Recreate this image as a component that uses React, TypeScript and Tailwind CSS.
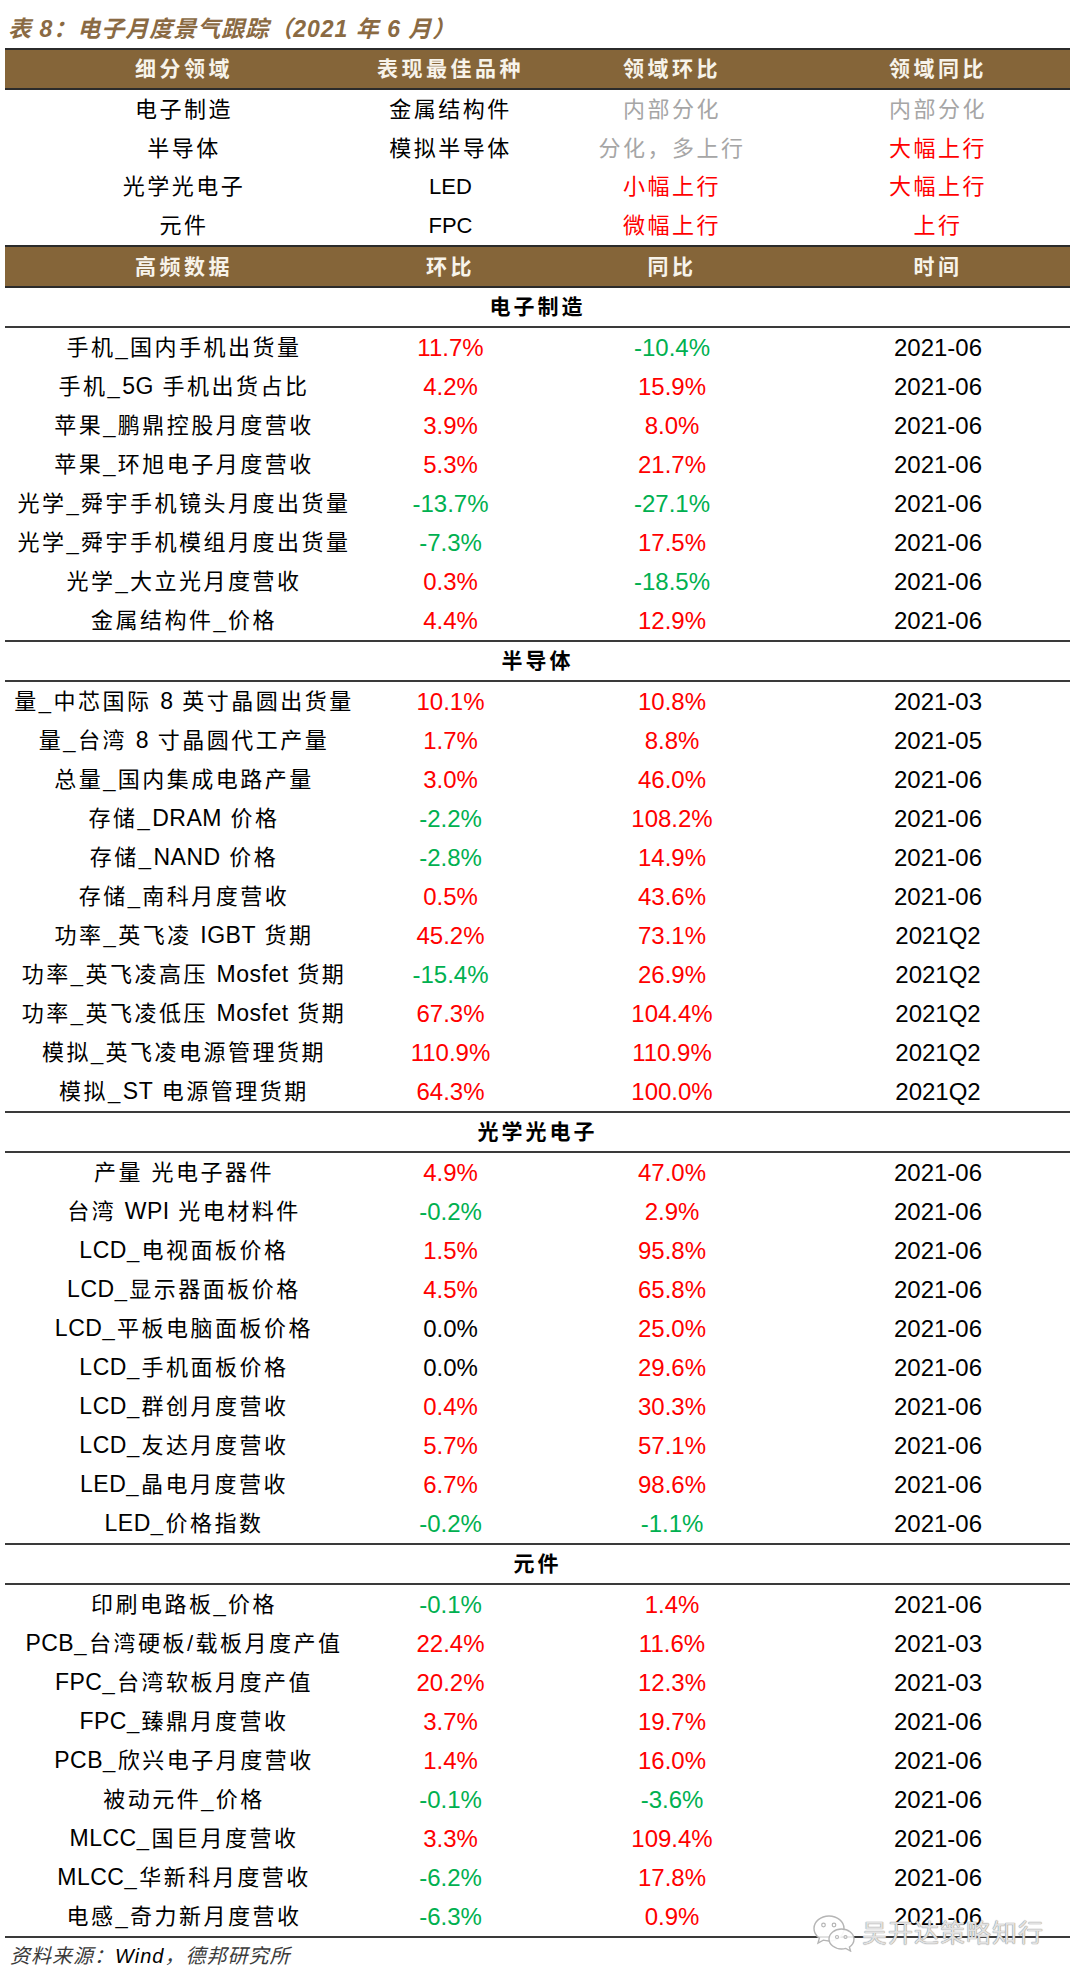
import React from "react";

type C = "r" | "g" | "k";
const colorOf = (c: C) =>
  c === "r" ? "text-[#ff0000]" : c === "g" ? "text-[#00b050]" : "text-black";

type Row = [string, string, C, string, C, string];

const sections: { title: string; rows: Row[] }[] = [
  {
    title: "电子制造",
    rows: [
      ["手机_国内手机出货量", "11.7%", "r", "-10.4%", "g", "2021-06"],
      ["手机_5G 手机出货占比", "4.2%", "r", "15.9%", "r", "2021-06"],
      ["苹果_鹏鼎控股月度营收", "3.9%", "r", "8.0%", "r", "2021-06"],
      ["苹果_环旭电子月度营收", "5.3%", "r", "21.7%", "r", "2021-06"],
      ["光学_舜宇手机镜头月度出货量", "-13.7%", "g", "-27.1%", "g", "2021-06"],
      ["光学_舜宇手机模组月度出货量", "-7.3%", "g", "17.5%", "r", "2021-06"],
      ["光学_大立光月度营收", "0.3%", "r", "-18.5%", "g", "2021-06"],
      ["金属结构件_价格", "4.4%", "r", "12.9%", "r", "2021-06"],
    ],
  },
  {
    title: "半导体",
    rows: [
      ["量_中芯国际 8 英寸晶圆出货量", "10.1%", "r", "10.8%", "r", "2021-03"],
      ["量_台湾 8 寸晶圆代工产量", "1.7%", "r", "8.8%", "r", "2021-05"],
      ["总量_国内集成电路产量", "3.0%", "r", "46.0%", "r", "2021-06"],
      ["存储_DRAM 价格", "-2.2%", "g", "108.2%", "r", "2021-06"],
      ["存储_NAND 价格", "-2.8%", "g", "14.9%", "r", "2021-06"],
      ["存储_南科月度营收", "0.5%", "r", "43.6%", "r", "2021-06"],
      ["功率_英飞凌 IGBT 货期", "45.2%", "r", "73.1%", "r", "2021Q2"],
      ["功率_英飞凌高压 Mosfet 货期", "-15.4%", "g", "26.9%", "r", "2021Q2"],
      ["功率_英飞凌低压 Mosfet 货期", "67.3%", "r", "104.4%", "r", "2021Q2"],
      ["模拟_英飞凌电源管理货期", "110.9%", "r", "110.9%", "r", "2021Q2"],
      ["模拟_ST 电源管理货期", "64.3%", "r", "100.0%", "r", "2021Q2"],
    ],
  },
  {
    title: "光学光电子",
    rows: [
      ["产量 光电子器件", "4.9%", "r", "47.0%", "r", "2021-06"],
      ["台湾 WPI 光电材料件", "-0.2%", "g", "2.9%", "r", "2021-06"],
      ["LCD_电视面板价格", "1.5%", "r", "95.8%", "r", "2021-06"],
      ["LCD_显示器面板价格", "4.5%", "r", "65.8%", "r", "2021-06"],
      ["LCD_平板电脑面板价格", "0.0%", "k", "25.0%", "r", "2021-06"],
      ["LCD_手机面板价格", "0.0%", "k", "29.6%", "r", "2021-06"],
      ["LCD_群创月度营收", "0.4%", "r", "30.3%", "r", "2021-06"],
      ["LCD_友达月度营收", "5.7%", "r", "57.1%", "r", "2021-06"],
      ["LED_晶电月度营收", "6.7%", "r", "98.6%", "r", "2021-06"],
      ["LED_价格指数", "-0.2%", "g", "-1.1%", "g", "2021-06"],
    ],
  },
  {
    title: "元件",
    rows: [
      ["印刷电路板_价格", "-0.1%", "g", "1.4%", "r", "2021-06"],
      ["PCB_台湾硬板/载板月度产值", "22.4%", "r", "11.6%", "r", "2021-03"],
      ["FPC_台湾软板月度产值", "20.2%", "r", "12.3%", "r", "2021-03"],
      ["FPC_臻鼎月度营收", "3.7%", "r", "19.7%", "r", "2021-06"],
      ["PCB_欣兴电子月度营收", "1.4%", "r", "16.0%", "r", "2021-06"],
      ["被动元件_价格", "-0.1%", "g", "-3.6%", "g", "2021-06"],
      ["MLCC_国巨月度营收", "3.3%", "r", "109.4%", "r", "2021-06"],
      ["MLCC_华新科月度营收", "-6.2%", "g", "17.8%", "r", "2021-06"],
      ["电感_奇力新月度营收", "-6.3%", "g", "0.9%", "r", "2021-06"],
    ],
  },
];

const GRID = "grid grid-cols-[358px_175px_268px_264px]";
const CJK = "font-['Liberation_Sans','Noto_Sans_CJK_SC',sans-serif]";

function Label({ text }: { text: string }) {
  const parts = text.split(/([A-Za-z0-9]+)/);
  return (
    <>
      {parts.map((p, i) =>
        /^[A-Za-z0-9]+$/.test(p) ? (
          <span key={i} className="text-[23px] tracking-[0.5px]">
            {p}
          </span>
        ) : (
          <span key={i}>{p}</span>
        )
      )}
    </>
  );
}

function Header({ cells, h }: { cells: string[]; h: string }) {
  return (
    <div
      className={`${GRID} ${h} items-center border-y-2 border-[#2b2b2b] bg-[#856539] text-center text-[21px] font-bold tracking-[3.5px] text-[#f7f3ea]`}
    >
      {cells.map((c, i) => (
        <div key={i}>{c}</div>
      ))}
    </div>
  );
}

function WeChatIcon() {
  return (
    <svg width="44" height="38" viewBox="0 0 44 38" fill="none">
      <path
        d="M17 2C8.7 2 2 7.6 2 14.5c0 3.9 2.1 7.3 5.4 9.6L6 29l5.3-2.8c1.8.5 3.7.8 5.7.8 8.3 0 15-5.6 15-12.5S25.3 2 17 2z"
        fill="rgba(255,255,255,0.85)"
        stroke="#b5b5b5"
        strokeWidth="1.4"
      />
      <circle cx="11.5" cy="11" r="1.8" fill="none" stroke="#b5b5b5" strokeWidth="1.2" />
      <circle cx="22" cy="11" r="1.8" fill="none" stroke="#b5b5b5" strokeWidth="1.2" />
      <path
        d="M29.5 15C22.6 15 17 19.5 17 25s5.6 10 12.5 10c1.5 0 3-.2 4.3-.6L38.5 37l-1.1-4c2.7-1.8 4.6-4.6 4.6-8 0-5.5-5.6-10-12.5-10z"
        fill="rgba(255,255,255,0.9)"
        stroke="#b5b5b5"
        strokeWidth="1.4"
      />
      <circle cx="25" cy="23" r="1.5" fill="none" stroke="#b5b5b5" strokeWidth="1.1" />
      <circle cx="33.5" cy="23" r="1.5" fill="none" stroke="#b5b5b5" strokeWidth="1.1" />
    </svg>
  );
}

export default function App() {
  return (
    <div className={`relative w-[1080px] bg-white ${CJK} text-black`}>
      <div className="h-[48px] pl-[8px] pt-[15px] text-[23px] font-bold italic leading-[28px] tracking-[1px] text-[#8a6a43]">
        表 8：电子月度景气跟踪（2021 年 6 月）
      </div>

      <div className="ml-[5px] w-[1065px]">
        <Header cells={["细分领域", "表现最佳品种", "领域环比", "领域同比"]} h="h-[42px]" />
        {[
          ["电子制造", "金属结构件", "内部分化", "gray", "内部分化", "gray"],
          ["半导体", "模拟半导体", "分化，多上行", "gray", "大幅上行", "red"],
          ["光学光电子", "LED", "小幅上行", "red", "大幅上行", "red"],
          ["元件", "FPC", "微幅上行", "red", "上行", "red"],
        ].map((r, i) => (
          <div
            key={i}
            className={`${GRID} h-[38.75px] items-center text-center text-[22px] tracking-[2.5px]`}
          >
            <div>{r[0]}</div>
            <div className={i >= 2 ? "text-[22px] tracking-[0px]" : ""}>{r[1]}</div>
            <div className={r[3] === "gray" ? "text-[#a6a6a6]" : "text-[#ff0000]"}>{r[2]}</div>
            <div className={r[5] === "gray" ? "text-[#a6a6a6]" : "text-[#ff0000]"}>{r[4]}</div>
          </div>
        ))}
        <Header cells={["高频数据", "环比", "同比", "时间"]} h="h-[43px]" />

        {sections.map((s, si) => (
          <div key={si}>
            <div
              className={`flex ${si === 0 ? "h-[40px]" : "h-[42px] border-t-2"} items-center justify-center border-b-2 border-[#3a3a3a] text-[21px] font-bold tracking-[3px]`}
            >
              {s.title}
            </div>
            {s.rows.map((r, ri) => (
              <div key={ri} className={`${GRID} h-[39px] items-center text-center`}>
                <div className="whitespace-nowrap text-[22px] tracking-[2.5px]">
                  <Label text={r[0]} />
                </div>
                <div className={`text-[24px] ${colorOf(r[2])}`}>{r[1]}</div>
                <div className={`text-[24px] ${colorOf(r[4])}`}>{r[3]}</div>
                <div className="text-[24px]">{r[5]}</div>
              </div>
            ))}
          </div>
        ))}
        <div className="h-[2px] bg-[#3a3a3a]" />
      </div>

      <div className="mt-[4px] h-[38px] pl-[10px] text-[20px] italic leading-[28px] tracking-[1px] text-[#3a3a3a]">
        资料来源：<span className="text-black">Wind</span>，德邦研究所
      </div>

      <div className="absolute left-[812px] top-[1914px] flex items-center gap-[6px]">
        <WeChatIcon />
        <span className="text-[25px] leading-[30px] tracking-[1px] text-[rgba(235,235,235,0.92)] [text-shadow:0_0_1px_#8a8a8a,0_0_1px_#8a8a8a]">
          吴开达策略知行
        </span>
      </div>
    </div>
  );
}
